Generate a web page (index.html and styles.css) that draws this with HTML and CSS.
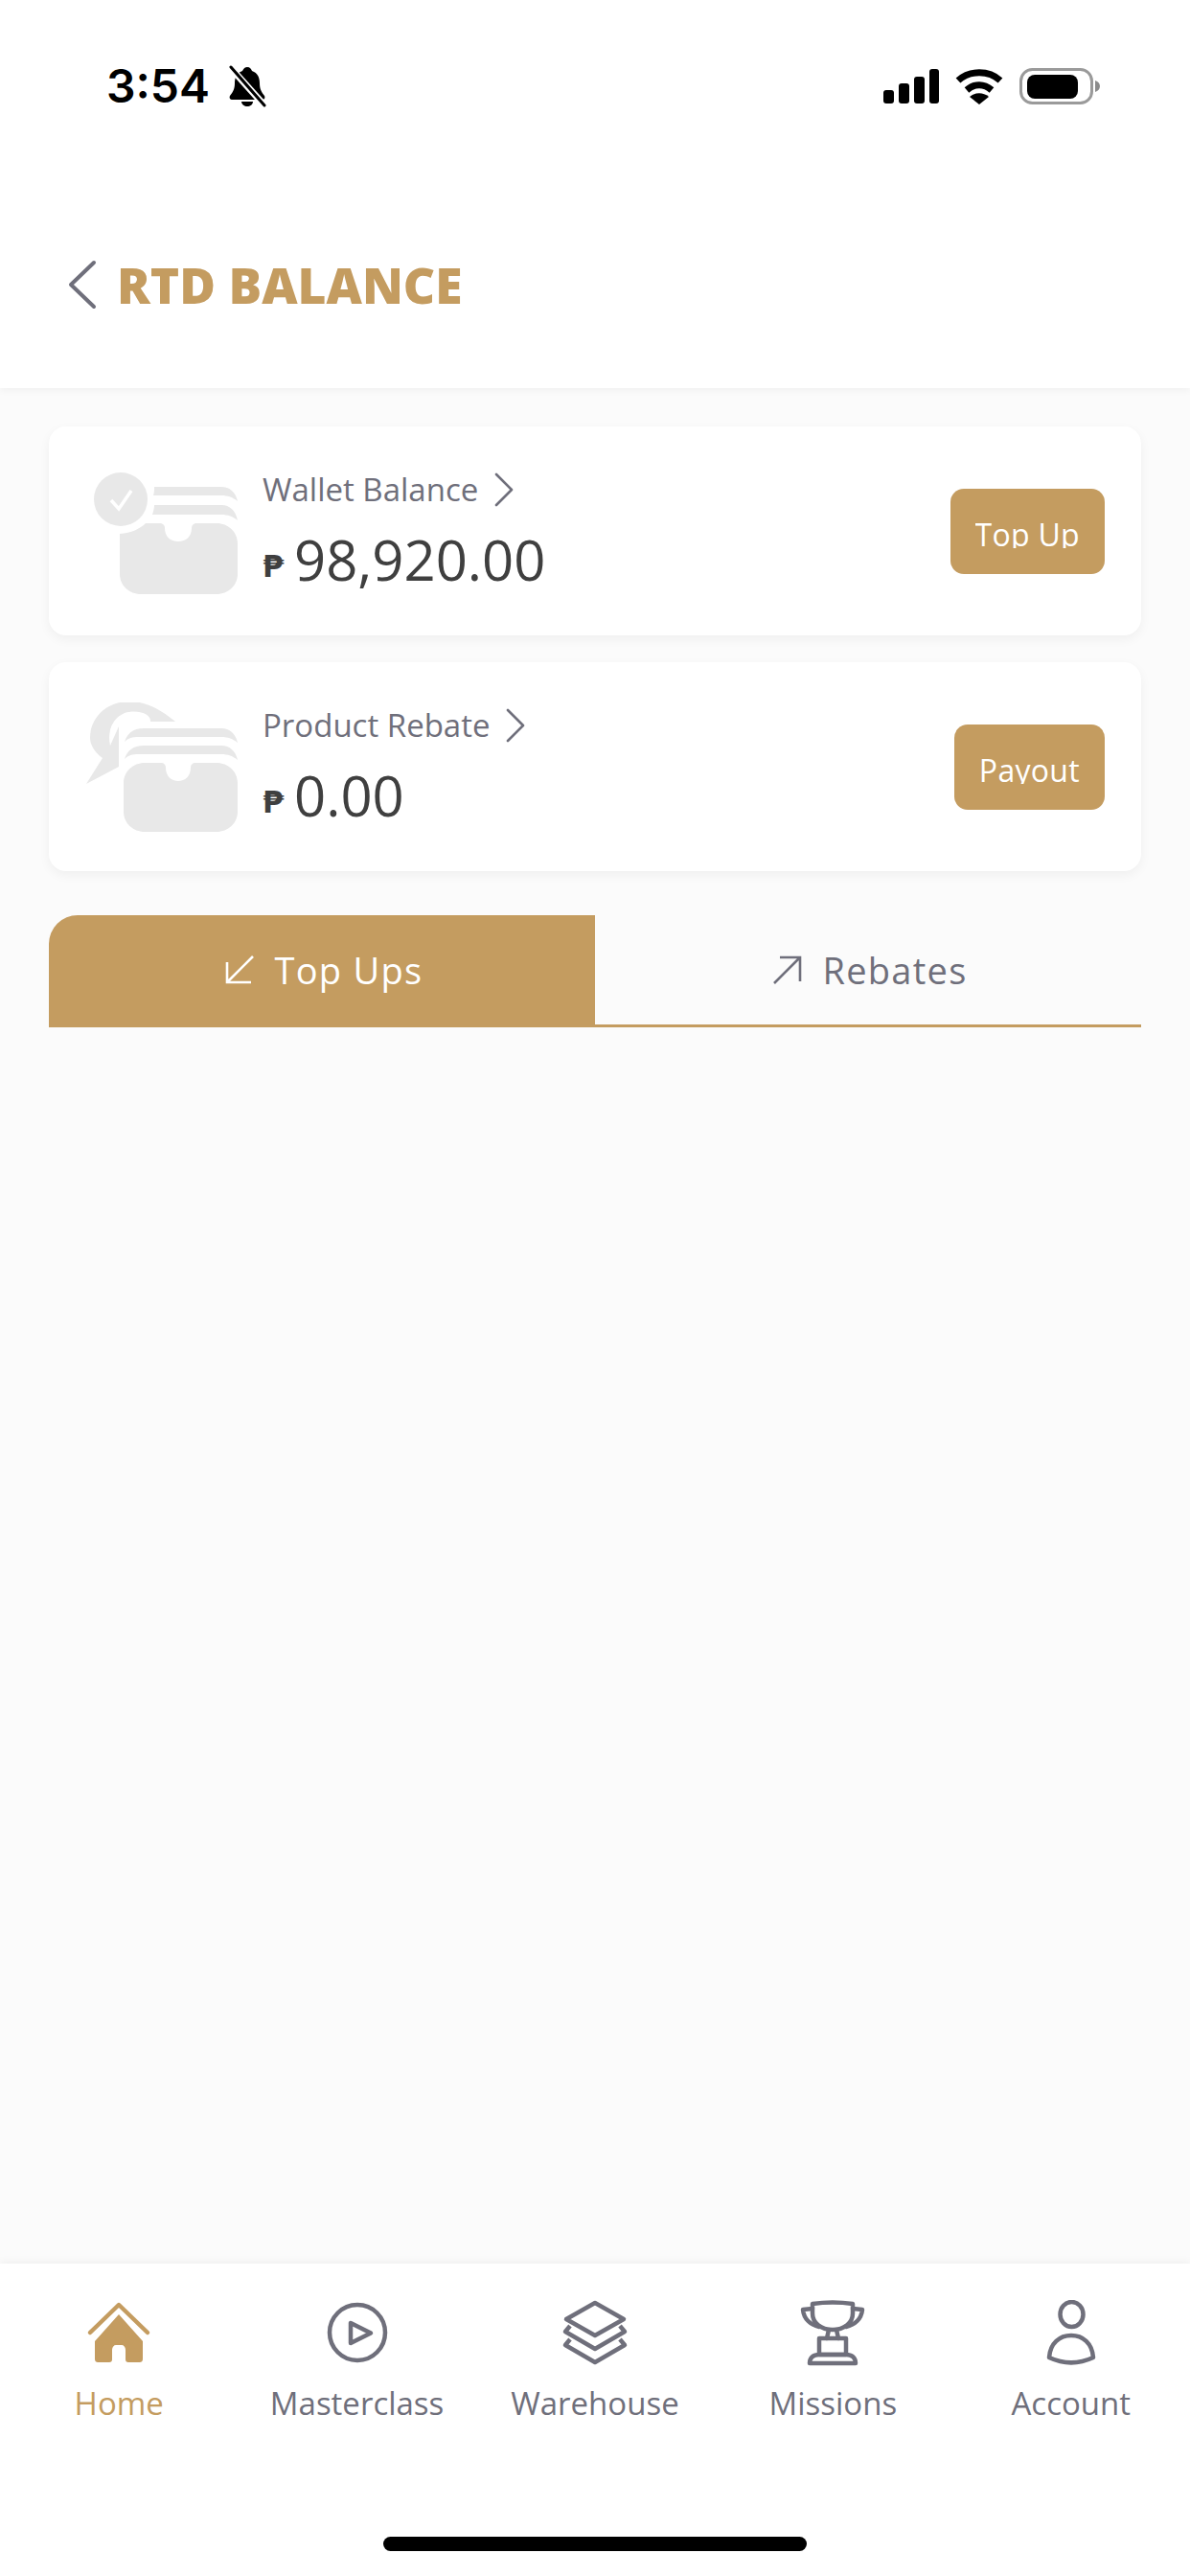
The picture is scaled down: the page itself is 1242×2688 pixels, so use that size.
FILE: index.html
```html
<!DOCTYPE html>
<html lang="en">
<head>
    <meta charset="UTF-8">
    <meta name="viewport" content="width=device-width, initial-scale=1.0">
    <title>RTD Balance</title>
    <link rel="stylesheet" href="styles.css">
</head>
<body>
    <div class="page">
        <header class="header">
            <div class="status-bar">
                <div class="status-left">
                    <span class="time">3:54</span>
                    <svg class="bell" viewBox="0 0 40 44">
                        <path fill="#000" d="M20 2c3 0 4 2 5 4 6 2 8 7 8 13 0 6 2 9 5 13 1 2 0 4-2 4H4c-2 0-3-2-2-4 3-4 5-7 5-13 0-6 2-11 8-13 1-2 2-4 5-4z"/>
                        <path fill="#000" d="M14 38h12c0 3-3 5-6 5s-6-2-6-5z"/>
                        <path stroke="#fff" stroke-width="7" d="M3 3l35 39"/>
                        <path stroke="#000" stroke-width="3" stroke-linecap="round" d="M3 2l35 40"/>
                    </svg>
                </div>
                <div class="status-right">
                    <svg class="signal" viewBox="0 0 58 36">
                        <rect x="0" y="22" width="11" height="14" rx="3"/>
                        <rect x="16" y="15" width="11" height="21" rx="3"/>
                        <rect x="32" y="8" width="11" height="28" rx="3"/>
                        <rect x="48" y="0" width="10" height="36" rx="3"/>
                    </svg>
                    <svg class="wifi" viewBox="0 0 50 38">
                        <path fill="none" stroke="#000" stroke-width="7" d="M3 13C15 2 35 2 47 13"/>
                        <path fill="none" stroke="#000" stroke-width="7" d="M12 23c8-7 18-7 26 0"/>
                        <path d="M15 30c6-5 14-5 20 0L25 38z"/>
                    </svg>
                    <svg class="battery" viewBox="0 0 84 38">
                        <rect x="1.5" y="1.5" width="74" height="35" rx="12" fill="none" stroke="#9a9a9a" stroke-width="3"/>
                        <rect x="8" y="7" width="53" height="25" rx="8"/>
                        <path fill="#8c8c8c" d="M79 13c3 1 5 3 5 6s-2 5-5 6z"/>
                    </svg>
                </div>
            </div>
            <div class="title-row">
                <svg class="back" viewBox="0 0 30 52">
                    <path fill="none" stroke="#6f6f7b" stroke-width="4" stroke-linecap="round" stroke-linejoin="round" d="M27 3L3 26l24 23"/>
                </svg>
                <h1>RTD BALANCE</h1>
            </div>
        </header>

        <main class="content">
            <section class="card">
                <svg class="card-icon" viewBox="85 487 170 140">
                    <circle cx="126" cy="521" r="28" fill="#e8e8e8"/>
                    <path fill="none" stroke="#fff" stroke-width="3.5" d="M116 522l8 9 13-19"/>
                    <path fill="#e8e8e8" d="M161 508h70c9 0 15 6 17 15-5-4-10-6-17-6h-71c1-3 1-6 1-9zM161 527h70c9 0 15 6 17 16-5-4-10-6-17-6h-72c1-3 2-7 2-10z"/>
                    <path fill="#e8e8e8" d="M125 557c12-1 21-5 27-11h14c4 0 6 2 6 5 0 9 6 14 14 14s14-5 14-14c0-3 2-5 6-5h20c12 0 22 9 22 21v32c0 12-10 21-22 21h-79c-12 0-22-9-22-21z"/>
                </svg>
                <div class="card-info">
                    <div class="card-label">
                        <span>Wallet Balance</span>
                        <svg class="label-arrow" viewBox="0 0 20 36"><path fill="none" stroke="#6f6f7b" stroke-width="2.6" stroke-linecap="round" stroke-linejoin="round" d="M2 2l16 16L2 34"/></svg>
                    </div>
                    <div class="amount"><span class="peso">₱</span>98,920.00</div>
                </div>
                <button class="action-btn" type="button"><span>Top Up</span></button>
            </section>

            <section class="card">
                <svg class="card-icon" viewBox="85 733 170 140">
                    <path fill="#e8e8e8" d="M183 753C165 738 150 732 135 732 110 732 94 750 94 770c0 8 6 16 13 21l-17 27 34-18v-42l-9 20c-3-13 1-28 15-34 12-4 28 0 27 9z"/>
                    <path fill="#e8e8e8" d="M130 774c3-9 9-14 20-14h81c9 0 15 6 17 15-5-4-10-6-17-6h-86c-7 0-11 1-15 5zM130 792c3-9 9-14 20-14h81c9 0 15 6 17 15-5-4-10-6-17-6h-86c-7 0-11 1-15 5z"/>
                    <path fill="#e8e8e8" d="M151 796h17c3 0 5 2 5 5 0 9 6 14 13 14s13-5 13-14c0-3 2-5 5-5h22c12 0 22 9 22 21v30c0 12-10 21-22 21h-75c-12 0-22-9-22-21v-30c0-12 10-21 22-21z"/>
                </svg>
                <div class="card-info">
                    <div class="card-label">
                        <span>Product Rebate</span>
                        <svg class="label-arrow" viewBox="0 0 20 36"><path fill="none" stroke="#6f6f7b" stroke-width="2.6" stroke-linecap="round" stroke-linejoin="round" d="M2 2l16 16L2 34"/></svg>
                    </div>
                    <div class="amount"><span class="peso">₱</span>0.00</div>
                </div>
                <button class="action-btn" type="button"><span>Payout</span></button>
            </section>

            <div class="tabs">
                <div class="tab tab-active">
                    <svg class="tab-arrow" viewBox="0 0 32 32"><path fill="none" stroke="#fff" stroke-width="2.6" d="M30 2L3 29M3 8v21h25"/></svg>
                    <span>Top Ups</span>
                </div>
                <div class="tab">
                    <svg class="tab-arrow" viewBox="0 0 32 32"><path fill="none" stroke="#6f6f7b" stroke-width="2.6" d="M2 30L29 3M8 3h21v25"/></svg>
                    <span>Rebates</span>
                </div>
            </div>
        </main>

        <nav class="bottom-nav">
            <div class="nav-items">
                <div class="nav-item nav-active">
                    <svg viewBox="0 0 70 70">
                        <path fill="none" stroke="#c49c60" stroke-width="4.5" stroke-linecap="round" stroke-linejoin="round" d="M5 34L35 5l30 29"/>
                        <path fill="#c49c60" d="M35 15l25 28v18c0 3-1 4-4 4H45c-2 0-3-1-3-3V52c0-3-2-5-4-5h-6c-2 0-4 2-4 5v10c0 2-1 3-3 3H14c-3 0-4-1-4-4V43z"/>
                    </svg>
                    <span>Home</span>
                </div>
                <div class="nav-item">
                    <svg viewBox="0 0 70 70">
                        <circle cx="35" cy="34" r="29" fill="none" stroke="#6f6f7b" stroke-width="4.500"/>
                        <path fill="none" stroke="#6f6f7b" stroke-width="4.500" stroke-linejoin="round" d="M28 24v21l21-10.500z"/>
                    </svg>
                    <span>Masterclass</span>
                </div>
                <div class="nav-item">
                    <svg viewBox="0 0 70 70" fill="none" stroke="#6f6f7b" stroke-width="4.500" stroke-linejoin="round">
                        <path d="M35 3l30 17-30 17L5 20z"/>
                        <path d="M9 27l-5 6 31 18 31-18-5-6"/>
                        <path d="M9 41l-5 6 31 18 31-18-5-6"/>
                    </svg>
                    <span>Warehouse</span>
                </div>
                <div class="nav-item">
                    <svg viewBox="0 0 70 70" fill="none" stroke="#6f6f7b" stroke-width="4.500" stroke-linejoin="round" stroke-linecap="round">
                        <path d="M14 4c14-2 28-2 42 0v10c0 10-9 17-21 17S14 24 14 14z"/>
                        <path d="M14 9L4 10c1 10 8 16 17 18M56 9l10 1c-1 10-8 16-17 18"/>
                        <path d="M31 31l-2 9M39 31l2 9"/>
                        <rect x="21" y="40" width="28" height="17"/>
                        <path d="M11 66c0-6 4-9 10-9h28c6 0 10 3 10 9z"/>
                    </svg>
                    <span>Missions</span>
                </div>
                <div class="nav-item">
                    <svg viewBox="0 0 70 70" fill="none" stroke="#6f6f7b" stroke-width="4.500" stroke-linejoin="round">
                        <ellipse cx="35.500" cy="15" rx="12" ry="13"/>
                        <path d="M12 60c1-15 11-23 23-23s22 8 23 23c-15 7-31 7-46 0z"/>
                    </svg>
                    <span>Account</span>
                </div>
            </div>
            <div class="home-indicator"></div>
        </nav>
    </div>
</body>
</html>
```

FILE: styles.css
```css
* {
    box-sizing: border-box;
}
body {
    margin: 0;
    padding: 0;
    background-color: #fbfbfb;
    font-family: 'Open Sans', sans-serif;
}
.page {
    width: 1242px;
    height: 2688px;
    display: flex;
    flex-direction: column;
}
.header {
    height: 405px;
    background-color: #fff;
    box-shadow: 0 2px 8px rgba(0, 0, 0, 0.05);
    position: relative;
}
.status-bar {
    height: 180px;
    padding: 0 94px 0 111px;
    display: flex;
    justify-content: space-between;
    align-items: center;
}
.status-left {
    display: flex;
    align-items: center;
    gap: 19px;
}
.time {
    font-family: 'Inter', sans-serif;
    font-size: 48px;
    font-weight: 600;
    line-height: 56px;
    color: #000;
}
.bell {
    width: 40px;
    height: 44px;
}
.status-right {
    display: flex;
    align-items: center;
    gap: 17px;
}
.signal {
    width: 58px;
    height: 36px;
}
.wifi {
    width: 50px;
    height: 38px;
}
.battery {
    width: 84px;
    height: 38px;
}
.title-row {
    display: flex;
    align-items: center;
    height: 100px;
    margin-top: 67px;
    padding-left: 71px;
}
.back {
    width: 30px;
    height: 52px;
}
h1 {
    margin: 0 0 0 21px;
    font-size: 51.5px;
    font-weight: 800;
    line-height: 70px;
    color: #c49c60;
}
.content {
    flex: 1;
    padding: 40px 51px 0;
    display: flex;
    flex-direction: column;
    gap: 28px;
}
.card {
    height: 218px;
    padding: 0 38px 0 34px;
    display: flex;
    align-items: center;
    background-color: #fff;
    border-radius: 18px;
    box-shadow: 0 4px 12px rgba(0, 0, 0, 0.05);
}
.card-icon {
    width: 170px;
    height: 140px;
    margin-top: 6px;
    flex-shrink: 0;
}
.card-info {
    flex: 1;
    margin-left: 19px;
}
.card-label {
    display: flex;
    align-items: center;
    gap: 17px;
    font-size: 33px;
    line-height: 44px;
    color: #6f6f7b;
}
.label-arrow {
    width: 20px;
    height: 36px;
}
.amount {
    display: flex;
    align-items: center;
    margin-top: 16px;
    font-size: 58px;
    font-weight: 500;
    line-height: 70px;
    color: #3f3f3f;
}
.peso {
    width: 33px;
    padding-top: 14px;
    font-family: 'DejaVu Sans', sans-serif;
    font-size: 32px;
    line-height: 40px;
    font-weight: bold;
}
.action-btn {
    height: 89px;
    padding: 0 26px;
    border: none;
    border-radius: 14px;
    background-color: #c49c60;
    color: #fff;
    font-family: 'Open Sans', sans-serif;
    font-size: 32px;
    letter-spacing: 0.3px;
    cursor: pointer;
}
/* the label sits low in the button and its descenders are cut off */
.action-btn span {
    display: block;
    height: 36px;
    overflow: hidden;
    line-height: 44px;
}
.tabs {
    display: flex;
    height: 117px;
    margin-top: 18px;
}
.tab {
    width: 570px;
    padding-left: 4px;
    display: flex;
    align-items: center;
    justify-content: center;
    gap: 20px;
    border-bottom: 3px solid #c49c60;
    font-size: 38px;
    font-weight: 500;
    letter-spacing: 1.3px;
    color: #6f6f7b;
}
.tab-active {
    background-color: #c49c60;
    border-top-left-radius: 30px;
    color: #fff;
}
.tab-arrow {
    width: 32px;
    height: 32px;
}
.bottom-nav {
    height: 326px;
    background-color: #fff;
    box-shadow: 0 -2px 8px rgba(0, 0, 0, 0.05);
    position: relative;
}
.nav-items {
    display: flex;
    padding-top: 38px;
}
.nav-item {
    width: 248.4px;
    display: flex;
    flex-direction: column;
    align-items: center;
    gap: 16px;
    font-size: 33px;
    line-height: 44px;
    color: #6f6f7b;
}
.nav-item svg {
    width: 70px;
    height: 70px;
}
.nav-active {
    color: #c49c60;
}
.home-indicator {
    width: 442px;
    height: 15px;
    margin: 117px auto 0;
    border-radius: 8px;
    background-color: #000;
}
```
